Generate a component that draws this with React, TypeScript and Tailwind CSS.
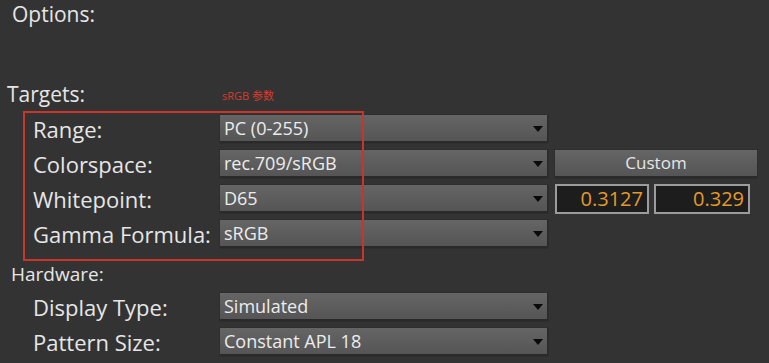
import React from 'react';

const FONT = { fontFamily: '"Open Sans", "Noto Sans", "Noto Sans CJK SC", sans-serif' };

interface SelectProps {
  value: string;
}

/**
 * Combo box with a dark triangle on the right
 */
function Select({ value }: SelectProps) {
  return (
    <div className="w-[328px] h-[28px] flex items-center justify-between pl-[4px] pr-[4px] bg-gradient-to-b from-[#656565] to-[#555555] border-b-2 border-r border-[#2a2a2a] shadow-[0_0_0_1px_#2e2e2e]">
      <span className="text-[18px] leading-[28px] text-[#ececec]">{value}</span>
      <svg width="10" height="6" viewBox="0 0 10 6" className="mt-[2px]">
        <polygon points="0,0 10,0 5,6" fill="#0a0a0a" />
      </svg>
    </div>
  );
}

interface RowProps {
  label: string;
  value: string;
  extra?: React.ReactNode;
}

function Row({ label, value, extra }: RowProps) {
  return (
    <div className="flex items-center h-[28px] pl-[33px]">
      <div className="w-[187px] text-[22px] leading-[28px] text-[#e6e6e6] whitespace-nowrap">{label}</div>
      <Select value={value} />
      {extra}
    </div>
  );
}

function NumberBox({ value, width }: { value: string; width: string }) {
  return (
    <div className={`${width} h-[30px] bg-[#1d1d1d] border-2 border-[#9c9c9c] flex items-center justify-end pr-[4px]`}>
      <span className="text-[20px] leading-[26px] text-[#e49a2a]">{value}</span>
    </div>
  );
}

export default function App() {
  return (
    <div className="w-[769px] h-[363px] bg-[#333333] overflow-hidden relative" style={FONT}>
      <div className="pl-[12px] text-[21px] leading-[28px] text-[#e6e6e6]">Options:</div>

      <div className="mt-[52px] flex items-end h-[28px]">
        <span className="w-[222px] pl-[7px] text-[21px] leading-[28px] text-[#e6e6e6]">Targets:</span>
        <span className="mb-[5px] text-[11px] leading-[14px] text-[#d93a2e]">sRGB 参数</span>
      </div>

      <div className="mt-[7px] flex flex-col gap-[7px]">
        <Row label="Range:" value="PC (0-255)" />
        <Row
          label="Colorspace:"
          value="rec.709/sRGB"
          extra={
            <div className="ml-[7px] w-[202px] h-[28px] flex items-center justify-center bg-gradient-to-b from-[#656565] to-[#555555] border-b-2 border-[#2a2a2a] shadow-[0_0_0_1px_#2e2e2e]">
              <span className="text-[17px] leading-[28px] text-[#e6e6e6]">Custom</span>
            </div>
          }
        />
        <Row
          label="Whitepoint:"
          value="D65"
          extra={
            <div className="ml-[7px] flex gap-[5px]">
              <NumberBox value="0.3127" width="w-[94px]" />
              <NumberBox value="0.329" width="w-[96px]" />
            </div>
          }
        />
        <Row label="Gamma Formula:" value="sRGB" />
      </div>

      <div className="mt-[14px] pl-[11px] text-[19px] leading-[24px] text-[#e6e6e6]">Hardware:</div>

      <div className="mt-[7px] flex flex-col gap-[7px]">
        <Row label="Display Type:" value="Simulated" />
        <Row label="Pattern Size:" value="Constant APL 18" />
      </div>

      {/* annotation frame drawn over the target rows */}
      <div className="absolute left-[23px] top-[111px] w-[341px] h-[150px] border-2 border-[#c8352a] pointer-events-none" />
    </div>
  );
}
